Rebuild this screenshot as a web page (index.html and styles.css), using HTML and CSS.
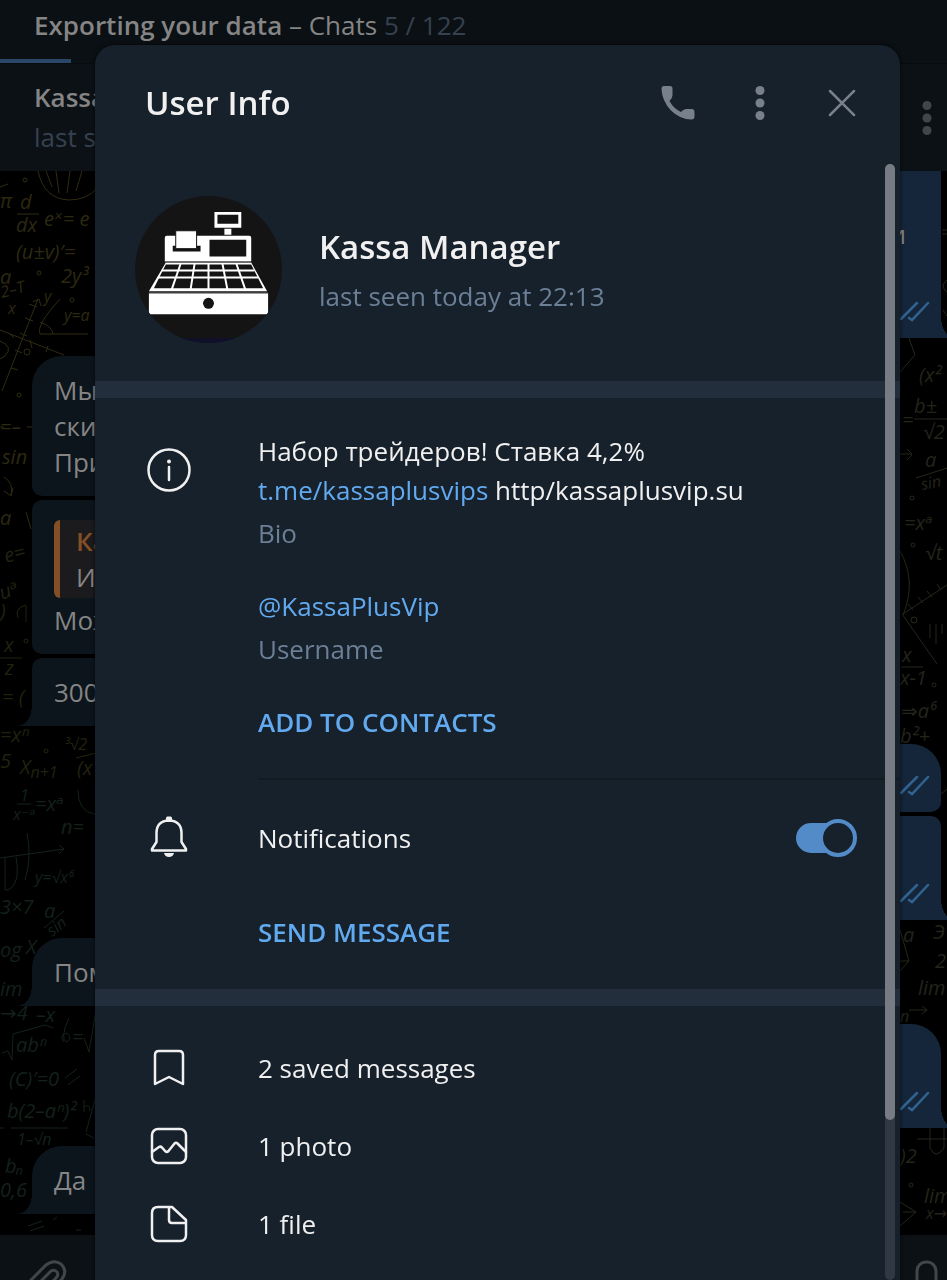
FILE: index.html
```html
<!DOCTYPE html>
<html lang="en">
<head>
<meta charset="utf-8">
<meta name="viewport" content="width=device-width, initial-scale=1">
<title>User Info</title>
<link rel="stylesheet" href="styles.css">
</head>
<body>
<div class="app">
  <header class="export-bar">
    <p class="export-text"><strong>Exporting your data</strong> – Chats <span class="count">5 / 122</span></p>
    <div class="export-progress"></div>
  </header>
  <div class="chat-header">
    <div>
      <div class="chat-name">Kassa</div>
      <div class="chat-status">last s</div>
    </div>
    <button class="icon-button chat-menu" aria-label="Chat menu">
      <svg width="10" height="36" viewBox="0 0 10 36" fill="currentColor"><circle cx="5" cy="5.500" r="4.500"/><circle cx="5" cy="18" r="4.500"/><circle cx="5" cy="30.500" r="4.500"/></svg>
    </button>
  </div>
  <main class="messages">
    <svg class="wallpaper wallpaper-left" width="100" height="1064" viewBox="0 171 100 1064" aria-hidden="true">
      <g class="ink-gold">
        <path d="M38 171q6 28 31 29q18 0 28-12M46 171l6 16M56 171l3 22M70 171l-3 22M82 171l-6 20M17 214h22M0 187l8-3M0 330l64 25M2 391l36-92M33 302l6-3 2 7M9 333l5 5M29 304l8 3M25 318l8 3M20 333l7 3M15 350l7 3M11 368l7 2M30 340l2 8M48 346l-2 6M60 299q-24 26-20 35h48M40 322q12 4 13 12M0 341q14 6 5 15l-5 3M4 477q10 6 7 18M4 491l7 5 2-8M27 427h5M0 427h4"/>
        <circle cx="25" cy="180" r="2"/><circle cx="39" cy="273" r="2"/><circle cx="72" cy="300" r="2"/><circle cx="27" cy="352" r="3"/><circle cx="19" cy="395" r="2"/>
        <g class="formula">
          <text x="20" y="209">d</text><text x="16" y="232">dx</text><text x="44" y="226">eˣ= e</text>
          <text x="16" y="259">(u±v)′=</text><text x="0" y="284">a</text><text x="61" y="283">2y³</text>
          <text x="0" y="208">π</text>
          <text class="small" x="2" y="298" transform="rotate(-15 2 298)">2–T</text><text class="small" x="8" y="314">x</text><text class="small" x="44" y="302">y</text>
          <text class="small" x="64" y="321">y=a</text><text x="2" y="464">sin</text><text x="0" y="434">=–</text>
          <text x="0" y="525">a</text>
        </g>
        <path d="M26 512l5 17"/>
      </g>
      <g class="ink-olive formula">
        <text x="6" y="563" transform="rotate(-15 6 563)">e=</text><text x="2" y="600" transform="rotate(-20 2 600)">uᵃ</text>
        <text x="0" y="618">)</text><path d="M18 618q-4-10 8-13M26 606v16"/><text x="4" y="652">x</text><path d="M0 658h22"/><text x="5" y="675">z</text>
        <text x="2" y="704">= (</text><text x="0" y="742">=xⁿ</text><text x="0" y="768">5</text>
        <text class="small" x="64" y="750">³√2</text><path d="M76 758l20-5"/><text x="77" y="775">(x</text>
        <text x="20" y="774">X<tspan class="small" dy="4">n+1</tspan></text><circle cx="46" cy="751" r="2"/><circle cx="26" cy="641" r="2"/>
      </g>
      <g class="ink-green">
        <path d="M17 804h14M0 858l64-9-5-4M59 854l5-5M27 833q5 24-2 47M5 858v32q8 1 12-13q1-9-1-20M78 790q0 22 17 24"/>
        <g class="formula"><text class="small" x="20" y="801">1</text><text class="small" x="13" y="820">x⁻ᵃ</text><text x="35" y="811">=xᵃ</text><text x="61" y="834">n=</text>
        <text class="small" x="35" y="883">y=√x⁶</text><text x="0" y="914">3×7</text><text x="44" y="918">a</text><path d="M44 928l20-17"/><text class="small" x="52" y="937" transform="rotate(-38 52 937)">sin</text>
        <text x="0" y="957">og</text><text x="26" y="954">X</text><text x="0" y="996">im</text><text x="0" y="1020">→4</text><text x="36" y="1022">–x</text>
        <path d="M2 1053l6-2 4 9 1-26 32-9 8 3M69 1018q-10 22-2 24q6-4 0-9q-9 2-3 9M84 1038l5 14 7-42"/>
        <text x="16" y="1052">abⁿ</text><text x="72" y="1044">=</text><text x="9" y="1086">(C)′=0</text><path d="M65 1078l12-9M68 1085l12-9"/>
        <text x="7" y="1118">b(2–aⁿ)²</text><path d="M0 1128h4M11 1128h57"/><text class="small" x="17" y="1145">1–√n</text><path d="M84 1100v12M84 1107q6-4 6 4M86 1132l9-32M94 1138l-8-4"/>
        <text x="5" y="1173">bₙ</text><text x="0" y="1197">0,6</text><path d="M28 1226l14-5M30 1231l14-5M53 1220l4-3M76 1230h5"/></g>
      </g>
    </svg>
    <svg class="wallpaper wallpaper-right ink-grey" width="50" height="1064" viewBox="897 171 50 1064" aria-hidden="true">
      <path d="M909 338l6 17-15 17M914 419h33M900 454h12l-5-5M912 455l-5 5M916 478l31-10M900 551q17 30 3 64M903 614l44-29M902 614l35 50M901 667h22M908 604l5 6M918 597l5 6M927 591l5 6M937 584l4 6M930 624v14M936 624v20M942 624v10M940 795l7-6M900 930l9 31-9 10M900 961h9M909 1010h18l-5-4M927 1010l-5 4M930 1128v20q6 12 14 0v-20M917 1139h30M900 1202l16 10-16 14M903 1212h12M942 230h5M942 234h5M947 280q-8 6 0 12M943 310l4 6"/>
      <circle cx="912" cy="498" r="2"/><circle cx="913" cy="545" r="2"/><circle cx="914" cy="620" r="3"/><circle cx="934" cy="685" r="2"/><circle cx="911" cy="1185" r="2"/>
      <g class="formula">
        <text x="919" y="382">(x²</text><text x="914" y="413">b±</text><text x="902" y="427">=</text><text x="923" y="439">√2</text><text x="925" y="467">a</text><text class="small" x="922" y="490" transform="rotate(-10 922 490)">sin</text>
        <text x="904" y="530">=xᵃ</text><text x="925" y="560">√t</text><text x="902" y="662">x</text><text x="900" y="685">x-1</text><text x="901" y="718">⇒a⁶</text><text x="900" y="743">b²+</text>
        <text x="903" y="942">a</text><text x="933" y="939">Э</text><text x="935" y="968">2</text><text x="918" y="995">lim</text><text class="small" x="900" y="1022">n</text><text x="900" y="1163">)2</text><text x="924" y="1203">lim</text><text class="small" x="926" y="1219">x→</text>
      </g>
    </svg>

    <div class="bubble out has-tail first"><p>и</p><svg class="ticks" viewBox="0 0 30 22"><path d="M1 19L17 3M9 18l3 2L28 3"/></svg></div>
    <div class="bubble in top gap"><p>Мы</p><p>ски</p><p>При</p></div>
    <div class="bubble in"><blockquote class="quote"><b>Ка</b><p>И</p></blockquote><p>Мож</p></div>
    <div class="bubble in has-tail"><p>300</p></div>
    <div class="bubble out top gap short"><svg class="ticks" viewBox="0 0 30 22"><path d="M1 19L17 3M9 18l3 2L28 3"/></svg></div>
    <div class="bubble out has-tail tall"><svg class="ticks" viewBox="0 0 30 22"><path d="M1 19L17 3M9 18l3 2L28 3"/></svg></div>
    <div class="bubble in top has-tail gap"><p>Пом</p></div>
    <div class="bubble out top has-tail gap tall"><svg class="ticks" viewBox="0 0 30 22"><path d="M1 19L17 3M9 18l3 2L28 3"/></svg></div>
    <div class="bubble in top has-tail gap"><p>Да</p></div>
  </main>
  <footer class="composer">
    <button class="icon-button" aria-label="Attach"><svg width="40" height="46" viewBox="0 0 40 46"><path d="M2 20L17 5q8-6 15-1 7 7 1 15L15 38q-6 4-10 0-4-5 0-10l17-17q4-2 6 1 2 3-1 6L12 33"/></svg></button>
    <button class="icon-button" aria-label="Voice message"><svg width="38" height="46" viewBox="0 0 38 46"><rect x="9" y="2" width="19" height="34" rx="9"/></svg></button>
  </footer>
</div>

<section class="dialog" role="dialog" aria-labelledby="dialog-title">
  <header class="dialog-header">
    <h1 id="dialog-title">User Info</h1>
    <button class="icon-button" aria-label="Call"><svg width="36" height="36" viewBox="0 0 36 36" fill="currentColor"><path d="M1.500 4Q1.500 1 4 1h6q2.500 0 2.500 2.500V10q0 3.500-3 6 4 7.500 11.500 11 2-2.500 5-3h5.500q3 0 3 3v4.500q0 3-3 3Q20 34.500 11 25.500 2 16 1.500 4Z"/></svg></button>
    <button class="icon-button" aria-label="More"><svg width="10" height="36" viewBox="0 0 10 36" fill="currentColor"><circle cx="5" cy="5.500" r="4.500"/><circle cx="5" cy="18" r="4.500"/><circle cx="5" cy="30.500" r="4.500"/></svg></button>
    <button class="icon-button" aria-label="Close"><svg width="28" height="28" viewBox="0 0 28 28"><path d="M2 2l24 24M26 2L2 26" fill="none" stroke="currentColor" stroke-width="2.500" stroke-linecap="round"/></svg></button>
  </header>

  <div class="profile">
    <svg class="avatar" viewBox="0 0 148 148" role="img" aria-label="Kassa Manager">
      <defs><clipPath id="round"><circle cx="74" cy="74" r="74"/></clipPath></defs>
      <g clip-path="url(#round)">
        <path fill="#141414" d="M0 0h148v148H0z"/><path fill="#11102a" d="M0 143h148v5H0z"/>
        <path fill="#fff" d="M80 16h27v16H80zM90 33h7v6h-7zM32 40h83q2 0 2 2v24H30V42q0-2 2-2zM31 67h86l16 29H14zM14 98h120v21H14z"/>
        <path fill="#141414" d="M83 19h21v9H83zM75 44h37v17H75zM38 50h28v6H38z"/>
        <path fill="#fff" stroke="#141414" d="M41 35h21v18H41z"/>
        <path stroke="#555" d="M30 66.500h87M14 97.500h120"/>
        <path fill="#141414" d="M31 69h86l12 24H19z"/>
        <path fill="none" stroke="#fff" stroke-width="2" d="M27 75h93M23 82h101M46 68l-9 26M60 68l-4 26M74 68v26M88 68l5 26M102 68l9 26"/>
        <circle cx="74" cy="108" r="5.500" fill="#141414"/>
      </g>
    </svg>
    <div><h2>Kassa Manager</h2><p class="muted">last seen today at 22:13</p></div>
  </div>

  <div class="details">
    <svg class="row-icon info-icon" viewBox="0 0 44 44"><circle cx="22" cy="22" r="20.500"/><path d="M22 19v13"/><circle cx="22" cy="13.500" r="2" fill="currentColor" stroke="none"/></svg>
    <div class="details-text">
      <p>Набор трейдеров! Ставка 4,2%<br><a href="#bio">t.me/kassaplusvips</a> http/kassaplusvip.su</p>
      <p class="label">Bio</p>
      <p class="spaced"><a href="#username">@KassaPlusVip</a></p>
      <p class="label">Username</p>
      <button class="text-button spaced">ADD TO CONTACTS</button>
    </div>
  </div>

  <div class="notifications">
    <svg class="row-icon" viewBox="0 0 44 44"><path d="M5 34.500v-1.500l4.500-7V17q0-12 12.500-12.500 12.500.5 12.500 12.500v9l4.500 7v1.500Z"/><path fill="currentColor" stroke="none" d="M19 4V2q0-1.500 1.500-1.500h3Q25 .5 25 2v2zM17 37h10q-1 4-5 4t-5-4Z"/></svg>
    <label for="notify">Notifications</label>
    <input class="toggle" id="notify" type="checkbox" checked>
  </div>
  <div class="send"><button class="text-button">SEND MESSAGE</button></div>

  <div class="media">
    <a href="#saved"><svg class="row-icon" viewBox="0 0 44 44"><path d="M8 38V9q0-4 4-4h20q4 0 4 4v29l-14-7Z"/></svg>2 saved messages</a>
    <a href="#photos"><svg class="row-icon" viewBox="0 0 44 44"><rect x="5" y="5" width="34" height="34" rx="6"/><path d="M5 28l7-5q1.500-1 3 .5l3.500 4q1.500 1 3-.5l6-7.500q1.500-1.500 3 0L39 28"/></svg>1 photo</a>
    <a href="#files"><svg class="row-icon" viewBox="0 0 44 44"><path d="M11 5h14l14 13v15q0 6-6 6H11q-6 0-6-6V11q0-6 6-6ZM22 5v13q0 3 3 3h14"/></svg>1 file</a>
  </div>
  <div class="scrollbar"><div class="thumb"></div></div>
</section>
</body>
</html>
```
FILE: styles.css
```css
*, *::before, *::after { box-sizing: border-box; }
body {
  margin: 0;
  background: #000;
  color: #f0f0f0;
  font: 26px/39px "Open Sans", "Noto Sans", sans-serif;
}
p, h1, h2, blockquote { margin: 0; }
a { color: #62aaf0; text-decoration: none; }
button { padding: 0; border: 0; background: none; font: inherit; cursor: pointer; }

.app {
  display: flex;
  flex-direction: column;
  height: 100vh;
  overflow: hidden;
  color: #858585;
}
.app > * { flex-shrink: 0; }
.export-bar {
  display: flex;
  flex-direction: column;
  justify-content: space-between;
  height: 64px;
  padding-top: 6px;
  background: #0b1014;
  border-bottom: 1px solid #080c0f;
}
.export-text { padding-left: 34px; }
.export-text strong, .chat-name { font-weight: 600; }
.count, .chat-status { color: #364150; }
.export-progress { width: 71px; height: 4px; background: #2a4768; }
.chat-header {
  display: flex;
  align-items: center;
  justify-content: space-between;
  height: 107px;
  padding: 0 15px 0 34px;
  background: #0c1115;
}
.chat-status { margin-top: 1px; }

.messages {
  position: relative;
  display: flex;
  flex-direction: column;
  gap: 4px;
  padding-bottom: 21px;
  overflow: hidden;
  line-height: 36px;
}
.wallpaper { position: absolute; top: 0; fill: none; stroke-width: 1; }
.wallpaper-left { left: 0; }
.wallpaper-right { right: 0; }
.formula { font: italic 20px "Open Sans", "DejaVu Sans", sans-serif; }
.formula .small { font-size: 16px; }
.ink-gold { stroke: #302c11; }
.ink-olive { stroke: #23240f; }
.ink-green { stroke: #14231b; }
.ink-grey { stroke: #27271d; }
.formula text { stroke: none; }
.ink-gold text { fill: #2d2910; }
.ink-olive text { fill: #20220f; }
.ink-green text { fill: #13211a; }
.ink-grey text { fill: #24241b; }

.bubble { position: relative; width: 280px; border-radius: 10px; }
.in { margin-left: 32px; padding: 16px 22px; background: #0c141c; }
.out { align-self: flex-end; margin-right: 6px; background: #15263b; }
.gap { margin-top: 14px; }
.in.top { border-top-left-radius: 30px; }
.out.top { border-top-right-radius: 30px; }
.in.has-tail { border-bottom-left-radius: 0; }
.out.has-tail { border-bottom-right-radius: 0; }
.has-tail::after { content: ""; position: absolute; bottom: 0; width: 14px; height: 20px; }
.in.has-tail::after { left: -14px; background: radial-gradient(ellipse 14px 20px at 0 0, transparent 97%, #0c141c 100%); }
.out.has-tail::after { right: -14px; background: radial-gradient(ellipse 14px 20px at 100% 0, transparent 97%, #15263b 100%); }
.first { height: 167px; padding: 45px 35px 0 0; border-top-right-radius: 0; text-align: right; }
.short { height: 68px; }
.tall { height: 104px; }
.ticks {
  position: absolute;
  right: 11px;
  bottom: 16px;
  width: 30px;
  height: 22px;
  fill: none;
  stroke: #326390;
  stroke-width: 2.500;
  stroke-linecap: round;
}
.quote {
  margin: 4px 0;
  padding: 3px 16px;
  border-left: 6px solid #844f25;
  border-radius: 6px;
  background: #1b1b1d;
}
.quote b { color: #844f25; font-weight: 600; }
.composer {
  display: flex;
  justify-content: space-between;
  height: 108px;
  padding: 25px 1px 0 29px;
  background: #0c1115;
}
.composer .icon-button { align-items: flex-start; }
.composer svg { fill: none; stroke: currentColor; stroke-width: 3; stroke-linecap: round; }

.icon-button { display: flex; align-items: center; justify-content: center; color: #78818b; }
.app .icon-button { color: #42454a; }

.dialog {
  position: fixed;
  inset: 45px 47px 0 95px;
  overflow: hidden;
  border-radius: 20px 20px 0 0;
  background: #17212b;
  box-shadow: 0 0 4px #000a;
}
.dialog-header {
  display: flex;
  align-items: center;
  gap: 34px;
  height: 119px;
  padding: 0 34px 4px 50px;
}
.dialog-header .icon-button { width: 48px; height: 48px; }
h1, h2 { font-size: 33px; font-weight: 600; line-height: 48px; }
h1 { flex: 1; }
.profile {
  display: flex;
  align-items: center;
  gap: 37px;
  padding: 32px 40px 38px;
  border-bottom: 17px solid #222e3c;
}
.avatar { width: 147px; height: 147px; }
.profile p { margin-top: 6px; }
.muted, .label { color: #6b7f97; }
.row-icon {
  flex: none;
  width: 44px;
  height: 44px;
  margin-right: 67px;
  fill: none;
  stroke: currentColor;
  stroke-width: 2.500;
  stroke-linejoin: round;
  stroke-linecap: round;
}
.details, .notifications { display: flex; padding-left: 52px; }
.details { padding-top: 34px; }
.info-icon { margin-top: 16px; }
.details-text { flex: 1; padding-bottom: 36px; border-bottom: 2px solid #121a22; }
.label { margin-top: 4px; }
.spaced { margin-top: 34px; }
.text-button { display: block; color: #62aaf0; font-weight: 600; }
.notifications { align-items: center; height: 116px; padding-right: 43px; }
.notifications label { flex: 1; }
.toggle { position: relative; appearance: none; width: 61px; height: 38px; margin: 0; cursor: pointer; }
.toggle::before {
  content: "";
  position: absolute;
  inset: 4px 6px 4px 0;
  border-radius: 15px;
  background: #528bc8;
}
.toggle::after {
  content: "";
  position: absolute;
  top: 0;
  right: 0;
  width: 38px;
  height: 38px;
  border: 4px solid #528bc8;
  border-radius: 50%;
  background: #17212b;
}
.send { padding: 17px 0 37px 163px; border-bottom: 17px solid #222e3c; }
.media { padding: 23px 0 24px 52px; }
.media a { display: flex; align-items: center; height: 78px; color: inherit; }
.scrollbar {
  position: absolute;
  top: 119px;
  right: 5px;
  bottom: 0;
  width: 10px;
  border-radius: 5px;
  background: #303943;
}
.thumb { height: 956px; border-radius: 5px; background: #777b83; }
```
